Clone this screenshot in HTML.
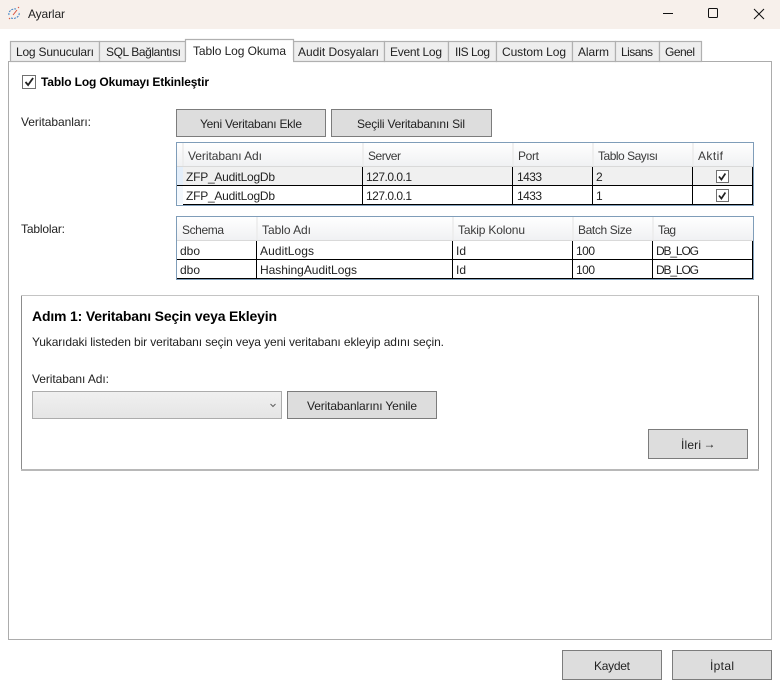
<!DOCTYPE html>
<html lang="tr"><head><meta charset="utf-8"><title>Ayarlar</title>
<style>
html,body{margin:0;padding:0;background:#fff;width:780px;height:689px;overflow:hidden}
svg{display:block}
text{font-family:"Liberation Sans",sans-serif;font-size:12px;fill:#222}
.b{font-weight:bold;fill:#000}
.btn{fill:#dddddd;stroke:#7c7c7c}
.tab{fill:#eeeeee;stroke:#b0b0b0;stroke-width:1.2}
.hl{stroke:#000;fill:none}
.h{fill:#3a3a3a}
</style></head><body>
<svg width="780" height="689" viewBox="0 0 780 689" xmlns="http://www.w3.org/2000/svg">
<defs>
<linearGradient id="hd" x1="0" y1="0" x2="0" y2="1"><stop offset="0" stop-color="#ffffff"/><stop offset="1" stop-color="#f0f1f3"/></linearGradient>
<linearGradient id="cb" x1="0" y1="0" x2="0" y2="1"><stop offset="0" stop-color="#f0f0f0"/><stop offset="1" stop-color="#e5e5e5"/></linearGradient>
</defs>
<rect width="780" height="29" fill="#f7f0eb"/>
<g fill="none" stroke-width="1">
<path d="M9 15a6 5 0 0 1 7-6" stroke="#3b7fc4" stroke-dasharray="2 1"/><path d="M11 18a6 5 0 0 0 8-6" stroke="#3b7fc4" stroke-dasharray="2 1"/><path d="M13 15l4-5" stroke="#d9503c"/><path d="M9 18l1 1M18 8l1-1" stroke="#d9503c"/>
</g>
<text x="28" y="18" textLength="37">Ayarlar</text>
<path d="M663 13.500h10" stroke="#111" fill="none"/>
<rect x="708.500" y="8.500" width="9" height="9" rx="1" fill="none" stroke="#111"/>
<path d="M754 9l10 10M764 9l-10 10" stroke="#111" fill="none"/>

<rect x="8.500" y="61.500" width="763" height="578" fill="#fff" stroke="#acacac"/>
<g>
<rect class="tab" x="10.500" y="41.500" width="89" height="20"/>
<rect class="tab" x="99.500" y="41.500" width="86" height="20"/>
<rect class="tab" x="293.500" y="41.500" width="91" height="20"/>
<rect class="tab" x="384.500" y="41.500" width="64" height="20"/>
<rect class="tab" x="448.500" y="41.500" width="48" height="20"/>
<rect class="tab" x="496.500" y="41.500" width="76" height="20"/>
<rect class="tab" x="572.500" y="41.500" width="43" height="20"/>
<rect class="tab" x="615.500" y="41.500" width="44" height="20"/>
<rect class="tab" x="659.500" y="41.500" width="42" height="20"/>
<path d="M185.500 62V39.500H293.500V62" fill="#fff" stroke="#b0b0b0" stroke-width="1.2"/>
<rect x="186" y="60" width="107" height="3" fill="#fff"/>
</g>
<text x="16" y="56" textLength="78">Log Sunucuları</text>
<text x="106" y="56" textLength="75">SQL Bağlantısı</text>
<text x="193" y="55" textLength="93">Tablo Log Okuma</text>
<text x="298" y="56" textLength="81">Audit Dosyaları</text>
<text x="390" y="56" textLength="52">Event Log</text>
<text x="455" y="56" textLength="35">IIS Log</text>
<text x="502" y="56" textLength="64">Custom Log</text>
<text x="578" y="56" textLength="31">Alarm</text>
<text x="621" y="56" textLength="32">Lisans</text>
<text x="665" y="56" textLength="30">Genel</text>

<rect x="22.500" y="75.500" width="13" height="13" fill="#fff" stroke="#707070"/>
<path d="M25.500 82l2.600 3 5-7" fill="none" stroke="#222" stroke-width="1.800"/>
<text class="b" x="41" y="86" textLength="168">Tablo Log Okumayı Etkinleştir</text>

<text x="21" y="126" textLength="70">Veritabanları:</text>
<rect class="btn" x="176.500" y="109.500" width="149" height="27"/>
<text x="200" y="128" textLength="102">Yeni Veritabanı Ekle</text>
<rect class="btn" x="331.500" y="109.500" width="160" height="27"/>
<text x="357" y="128" textLength="108">Seçili Veritabanını Sil</text>

<!-- table 1 -->
<rect x="176.500" y="142.500" width="577" height="63" fill="#fff" stroke="#7f9db9"/>
<rect x="177" y="143" width="576" height="23" fill="url(#hd)"/>
<rect x="177" y="166" width="576" height="1" fill="#d9d9d9"/>
<path d="M183 143v23M363 143v23M513 143v23M593 143v23M693 143v23" stroke="#ebebeb" fill="none" stroke-width="1.500"/>
<rect x="183" y="167" width="570" height="18" fill="#f0f0f0"/>
<rect x="177" y="167" width="6" height="18" fill="#e3eefa"/>
<rect x="177" y="186" width="6" height="18" fill="#f3f8fd"/>
<path d="M177 185.500H753M183 204.500H753M362.500 167V205M512.500 167V205M592.500 167V205M692.500 167V205M752.500 167V205" class="hl"/>
<text class="h" x="188" y="160" textLength="74">Veritabanı Adı</text>
<text class="h" x="368" y="160" textLength="33">Server</text>
<text class="h" x="518" y="160" textLength="21">Port</text>
<text class="h" x="598" y="160" textLength="60">Tablo Sayısı</text>
<text class="h" x="698" y="160" textLength="25">Aktif</text>
<text x="186" y="181" textLength="89">ZFP_AuditLogDb</text>
<text x="366" y="181" textLength="46">127.0.0.1</text>
<text x="517" y="181" textLength="25">1433</text>
<text x="596" y="181">2</text>
<text x="186" y="200" textLength="89">ZFP_AuditLogDb</text>
<text x="366" y="200" textLength="46">127.0.0.1</text>
<text x="517" y="200" textLength="25">1433</text>
<text x="596" y="200">1</text>
<rect x="716.500" y="170.500" width="12" height="12" fill="#fff" stroke="#707070"/>
<path d="M719 176.500l2.400 3 4-6" fill="none" stroke="#222" stroke-width="1.700"/>
<rect x="716.500" y="189.500" width="12" height="12" fill="#fff" stroke="#707070"/>
<path d="M719 195.500l2.400 3 4-6" fill="none" stroke="#222" stroke-width="1.700"/>

<!-- table 2 -->
<rect x="176.500" y="216.500" width="577" height="63" fill="#fff" stroke="#7f9db9"/>
<rect x="177" y="217" width="576" height="23" fill="url(#hd)"/>
<rect x="177" y="240" width="576" height="1" fill="#d9d9d9"/>
<path d="M257 217v23M453 217v23M573 217v23M653 217v23" stroke="#ebebeb" fill="none" stroke-width="1.500"/>
<path d="M177 259.500H753M177 278.500H753M256.500 241V279M452.500 241V279M572.500 241V279M652.500 241V279M752.500 241V279" class="hl"/>
<text class="h" x="182" y="234" textLength="42">Schema</text>
<text class="h" x="262" y="234" textLength="49">Tablo Adı</text>
<text class="h" x="458" y="234" textLength="67">Takip Kolonu</text>
<text class="h" x="578" y="234" textLength="54">Batch Size</text>
<text class="h" x="658" y="234" textLength="18">Tag</text>
<text x="180" y="255" textLength="20">dbo</text>
<text x="260" y="255" textLength="54">AuditLogs</text>
<text x="456" y="255" textLength="10">Id</text>
<text x="576" y="255" textLength="19">100</text>
<text x="656" y="255" textLength="43">DB_LOG</text>
<text x="180" y="274" textLength="20">dbo</text>
<text x="260" y="274" textLength="97">HashingAuditLogs</text>
<text x="456" y="274" textLength="10">Id</text>
<text x="576" y="274" textLength="19">100</text>
<text x="656" y="274" textLength="43">DB_LOG</text>

<text x="21" y="233" textLength="44">Tablolar:</text>

<!-- step box -->
<rect x="21.500" y="295.500" width="737" height="174" fill="#fff" stroke="#a0a0a0"/>
<path d="M21.500 296V469M758.500 296V469" stroke="#8c8c8c" fill="none"/>
<path d="M21 295.500H759" stroke="#c4c4c4" fill="none"/>
<path d="M21 470H759" stroke="#b8b8b8" fill="none" stroke-width="2"/>
<text class="b" x="32" y="321" style="font-size:14px" textLength="245">Adım 1: Veritabanı Seçin veya Ekleyin</text>
<text x="32" y="346" textLength="412">Yukarıdaki listeden bir veritabanı seçin veya yeni veritabanı ekleyip adını seçin.</text>
<text x="32" y="383" textLength="77">Veritabanı Adı:</text>
<rect x="32.500" y="391.500" width="249" height="27" fill="url(#cb)" stroke="#acacac"/>
<path d="M270.500 404l2.500 2.500 2.500-2.500" fill="none" stroke="#606060"/>
<rect class="btn" x="287.500" y="391.500" width="149" height="27"/>
<text x="307" y="410" textLength="110">Veritabanlarını Yenile</text>
<rect class="btn" x="648.500" y="429.500" width="99" height="29"/>
<text x="681" y="449" textLength="20">İleri</text>
<text x="703.500" y="448" textLength="11">→</text>
<rect class="btn" x="562.500" y="650.500" width="99" height="29"/>
<text x="594" y="670" textLength="36">Kaydet</text>
<rect class="btn" x="672.500" y="650.500" width="99" height="29"/>
<text x="710" y="670" textLength="24">İptal</text>
</svg>
</body></html>
